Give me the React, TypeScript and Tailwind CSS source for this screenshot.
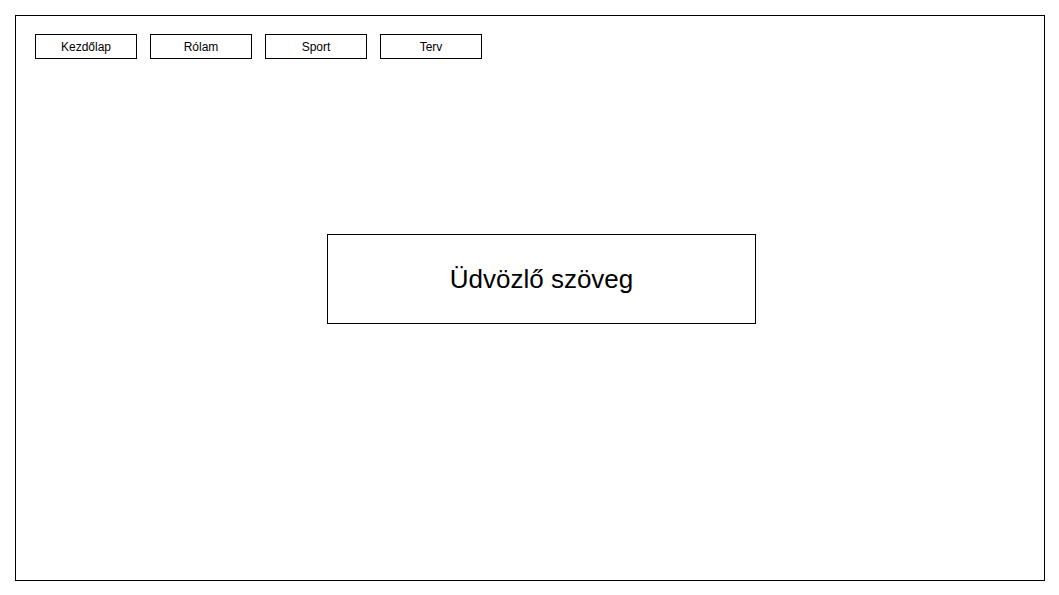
export default function App() {
  const menu = ['Kezdőlap', 'Rólam', 'Sport', 'Terv']

  return (
    <div className="w-[1059px] h-[595px] bg-white pt-[15px] pl-[15px] font-['Liberation_Sans',Arial,sans-serif] text-black">
      <div className="w-[1030px] h-[566px] border border-black">
        {/* Navigation */}
        <nav className="flex gap-[13px] ml-[19px] mt-[18px]">
          {menu.map((item) => (
            <div
              key={item}
              className="w-[102px] h-[25px] border border-black flex items-center justify-center text-[12px]"
            >
              {item}
            </div>
          ))}
        </nav>

        {/* Welcome box */}
        <div className="ml-[311px] mt-[175px] w-[429px] h-[90px] border border-black flex items-center justify-center text-[26px]">
          Üdvözlő szöveg
        </div>
      </div>
    </div>
  )
}
